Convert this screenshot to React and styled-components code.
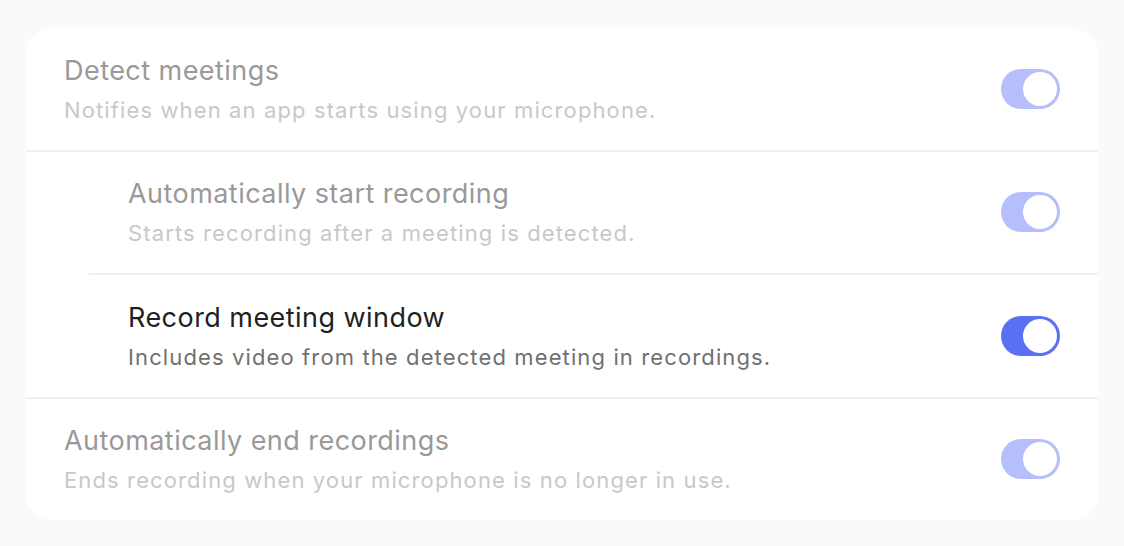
import React from "react";
import styled, { createGlobalStyle } from "styled-components";

const GlobalStyle = createGlobalStyle`
  html, body {
    margin: 0;
    padding: 0;
    background: #fafafa;
  }
  body {
    font-family: Inter, "Noto Sans", "Liberation Sans", sans-serif;
    -webkit-font-smoothing: antialiased;
  }
`;

const settings = [
  {
    title: "Detect meetings",
    desc: "Notifies when an app starts using your microphone.",
    nested: false,
    enabled: false,
    divider: "full",
  },
  {
    title: "Automatically start recording",
    desc: "Starts recording after a meeting is detected.",
    nested: true,
    enabled: false,
    divider: "inset",
  },
  {
    title: "Record meeting window",
    desc: "Includes video from the detected meeting in recordings.",
    nested: true,
    enabled: true,
    divider: "full",
  },
  {
    title: "Automatically end recordings",
    desc: "Ends recording when your microphone is no longer in use.",
    nested: false,
    enabled: false,
    divider: null,
  },
];

const App = () => {
  return (
    <>
      <GlobalStyle />
      <Page>
        <Card>
          {settings.map((s) => (
            <React.Fragment key={s.title}>
              <Row $nested={s.nested}>
                <Text>
                  <Title $enabled={s.enabled}>{s.title}</Title>
                  <Desc $enabled={s.enabled}>{s.desc}</Desc>
                </Text>
                <Toggle $enabled={s.enabled} aria-checked="true" role="switch">
                  <Knob />
                </Toggle>
              </Row>
              {s.divider && <Divider $inset={s.divider === "inset"} />}
            </React.Fragment>
          ))}
        </Card>
      </Page>
    </>
  );
};

const Page = styled.div`
  padding: 28px 26px 26px;
`;

const Card = styled.div`
  background: #ffffff;
  border-radius: 26px;
  display: flex;
  flex-direction: column;
  overflow: hidden;
`;

const Row = styled.div`
  display: flex;
  align-items: center;
  justify-content: space-between;
  height: 121.5px;
  padding: 0 38px 0 ${({ $nested }) => ($nested ? "102px" : "38px")};
  box-sizing: border-box;
`;

const Text = styled.div`
  display: flex;
  flex-direction: column;
  gap: 9px;
`;

const Title = styled.div`
  font-size: 27px;
  line-height: 33px;
  letter-spacing: 0.45px;
  color: ${({ $enabled }) => ($enabled ? "#1f1f1f" : "#999999")};
`;

const Desc = styled.div`
  font-size: 22px;
  line-height: 28px;
  letter-spacing: 1.12px;
  color: ${({ $enabled }) => ($enabled ? "#707070" : "#c8c8c8")};
`;

const Divider = styled.div`
  height: 2px;
  background: #efefef;
  margin-left: ${({ $inset }) => ($inset ? "63px" : "0")};
`;

const Toggle = styled.div`
  width: 59px;
  height: 40px;
  border-radius: 20px;
  padding: 3px;
  box-sizing: border-box;
  display: flex;
  justify-content: flex-end;
  align-items: center;
  flex-shrink: 0;
  background: ${({ $enabled }) => ($enabled ? "#5a70f2" : "#b6bffb")};
`;

const Knob = styled.div`
  width: 34px;
  height: 34px;
  border-radius: 50%;
  background: #ffffff;
`;

export default App;
